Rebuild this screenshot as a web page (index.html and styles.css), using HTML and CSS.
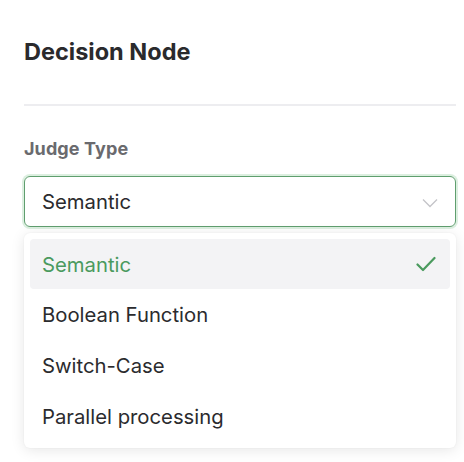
FILE: index.html
```html
<!DOCTYPE html>
<html>
<head>
<meta charset="utf-8">
<link rel="stylesheet" href="styles.css">
</head>
<body>
<div class="panel">
  <h1 class="title">Decision Node</h1>
  <div class="divider"></div>
  <div class="label">Judge Type</div>
  <div class="field">
    <div class="select">
      <span class="value">Semantic</span>
      <svg class="chevron" width="16" height="10" viewBox="0 0 16 10"><path d="M1 1.5 L8 8.5 L15 1.5" fill="none" stroke="#c4c4c8" stroke-width="1.3"/></svg>
    </div>
    <div class="menu">
      <div class="option selected"><span>Semantic</span>
        <svg class="check" width="20" height="16" viewBox="0 0 20 16"><path d="M1.5 8.5 L7 14 L18.5 2" fill="none" stroke="#4a9a5e" stroke-width="2.2" stroke-linecap="round" stroke-linejoin="round"/></svg>
      </div>
      <div class="option">Boolean Function</div>
      <div class="option">Switch-Case</div>
      <div class="option">Parallel processing</div>
    </div>
  </div>
</div>
</body>
</html>
```
FILE: styles.css
```css
html, body { margin: 0; padding: 0; background: #fff; }
body { font-family: Inter, "Noto Sans", sans-serif; color: #2b2b2e; width: 464px; height: 462px; overflow: hidden; }
.panel { padding: 0 8px 0 24px; }
.title { margin: 0; padding-top: 36px; font-size: 23.5px; font-weight: 700; line-height: 32px; color: #2a2a2d; }
.divider { height: 2px; background: #ededf0; margin-top: 36px; }
.label { margin-top: 31px; font-size: 18px; font-weight: 700; color: #6a6a6e; line-height: 24px; letter-spacing: 0.1px; }
.field { position: relative; margin-top: 15px; }
.select { height: 49px; border: 1px solid #5f9e6e; border-radius: 6px; box-shadow: 0 0 0 2px #dcefe0; display: flex; align-items: center; justify-content: space-between; padding: 0 17px 0 17px; }
.value { font-size: 20.3px; color: #2b2b2e; }
.chevron { display: block; margin-top: 2px; }
.menu { position: absolute; left: 0; right: 0; top: 57px; background: #fff; border-radius: 6px; box-shadow: 0 2px 14px rgba(0,0,0,0.10), 0 0 2px rgba(0,0,0,0.06); padding: 6px; }
.option { height: 51px; display: flex; align-items: center; justify-content: space-between; padding: 0 14px 0 12px; font-size: 20.3px; color: #2b2b2e; border-radius: 4px; }
.option.selected { background: #f3f3f5; color: #4a9a5e; height: 50px; }
.check { display: block; }
```
